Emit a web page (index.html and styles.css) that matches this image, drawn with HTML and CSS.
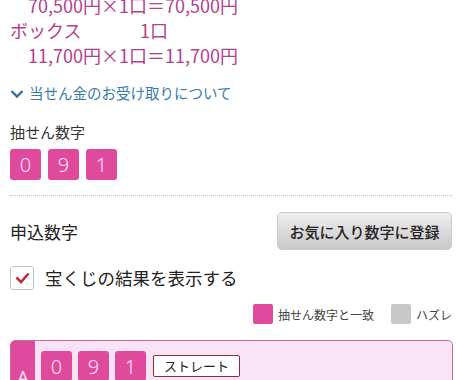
FILE: index.html
```html
<!DOCTYPE html>
<html lang="ja">
<head>
  <meta charset="UTF-8">
  <title>当せん結果</title>
  <link rel="stylesheet" href="styles.css">
</head>
<body>
  <div class="prize">
    <div class="calc">70,500円×1口＝70,500円</div>
    <div class="type"><span class="type-name">ボックス</span><span>1口</span></div>
    <div class="calc">11,700円×1口＝11,700円</div>
  </div>

  <a class="receive" href="#">
    <svg class="chevron" width="14" height="10" viewBox="0 0 14 10"><path d="M1.5 2 L7 7.5 L12.5 2" fill="none" stroke="#2f6f9c" stroke-width="2.4"/></svg>
    当せん金のお受け取りについて
  </a>

  <div class="draw">
    <div class="draw-title">抽せん数字</div>
    <div class="digits">
      <span class="digit">0</span>
      <span class="digit">9</span>
      <span class="digit">1</span>
    </div>
  </div>

  <div class="entry-head">
    <div class="entry-title">申込数字</div>
    <button class="fav">お気に入り数字に登録</button>
  </div>

  <label class="show-result">
    <span class="check">
      <svg width="15" height="12" viewBox="0 0 15 12"><path d="M1.5 5.5 L6 10 L13.5 1.5" fill="none" stroke="#c42a3c" stroke-width="2.6"/></svg>
    </span>
    宝くじの結果を表示する
  </label>

  <div class="legend">
    <span class="swatch hit"></span><span class="legend-text">抽せん数字と一致</span>
    <span class="swatch miss"></span><span class="legend-text">ハズレ</span>
  </div>

  <div class="card">
    <div class="card-label">A</div>
    <div class="card-body">
      <span class="digit small">0</span>
      <span class="digit small">9</span>
      <span class="digit small">1</span>
      <span class="tag">ストレート</span>
    </div>
  </div>
</body>
</html>
```

FILE: styles.css
```css
html {
  background: white;
}

body {
  margin: 0;
  padding: 0 8px 0 10px;
  font-family: "Noto Sans CJK JP", "Noto Sans", sans-serif;
  color: #333;
  overflow: hidden;
  height: 380px;
}

.prize {
  margin-top: -7px;
  color: #b3408d;
  font-size: 18px;
  line-height: 25px;
}

.calc {
  padding-left: 18px;
}

.type {
  display: flex;
}

.type-name {
  width: 130px;
}

.receive {
  display: flex;
  align-items: center;
  gap: 5px;
  margin-top: 14px;
  color: #3a7ba6;
  font-size: 14.5px;
  line-height: 22px;
  text-decoration: none;
}

.chevron {
  margin-top: 2px;
}

.draw {
  margin-top: 17px;
  padding-bottom: 15px;
  border-bottom: 1px dotted #bdbdbd;
}

.draw-title {
  font-size: 15px;
  line-height: 22px;
}

.digits {
  display: flex;
  gap: 7px;
  margin-top: 6px;
}

.digit {
  display: flex;
  align-items: center;
  justify-content: center;
  width: 31px;
  height: 31px;
  background: #df4a9c;
  border-radius: 3px;
  color: #fde2f1;
  font-family: "Noto Sans", sans-serif;
  font-size: 20px;
  font-weight: 300;
}

.entry-head {
  display: flex;
  align-items: center;
  justify-content: space-between;
  margin-top: 16px;
}

.entry-title {
  font-size: 17px;
  color: #222;
}

.fav {
  width: 175px;
  height: 38px;
  border: 1px solid #c9c9c9;
  border-radius: 5px;
  background: linear-gradient(#eeeeee, #c9c9c9);
  font-family: "Noto Sans CJK JP", sans-serif;
  font-size: 15px;
  font-weight: 500;
  color: #222;
  padding: 0;
}

.show-result {
  display: flex;
  align-items: center;
  gap: 11px;
  margin-top: 15px;
  font-size: 17.5px;
  color: #222;
}

.check {
  display: flex;
  align-items: center;
  justify-content: center;
  width: 22px;
  height: 22px;
  border: 1px solid #c3c3c3;
  border-radius: 3px;
  background: white;
}

.legend {
  display: flex;
  align-items: center;
  justify-content: flex-end;
  margin-top: 14px;
  font-size: 12px;
  color: #444;
}

.swatch {
  width: 20px;
  height: 20px;
  border-radius: 2px;
  margin-right: 5px;
}

.hit {
  background: #df4a9c;
}

.miss {
  background: #c8c8c8;
  margin-left: 17px;
}

.card {
  display: flex;
  margin-top: 16px;
  margin-right: -1px;
  height: 60px;
  border: 1px solid #c76aa9;
  border-radius: 5px;
  background: #fae3f4;
  overflow: hidden;
}

.card-label {
  display: flex;
  align-items: flex-end;
  justify-content: center;
  width: 24px;
  padding-bottom: 12px;
  background: #df4a9c;
  color: #fde2f1;
  font-family: "Noto Sans", sans-serif;
  font-size: 18px;
}

.card-body {
  display: flex;
  align-items: flex-start;
  gap: 6px;
  padding: 10px 0 0 6px;
}

.small {
  height: 30px;
}

.tag {
  margin: 4px 0 0 1px;
  padding: 0 10px;
  height: 20px;
  line-height: 20px;
  border: 1px solid #8c2c3c;
  border-radius: 2px;
  background: white;
  font-size: 13px;
  color: #222;
}
```
